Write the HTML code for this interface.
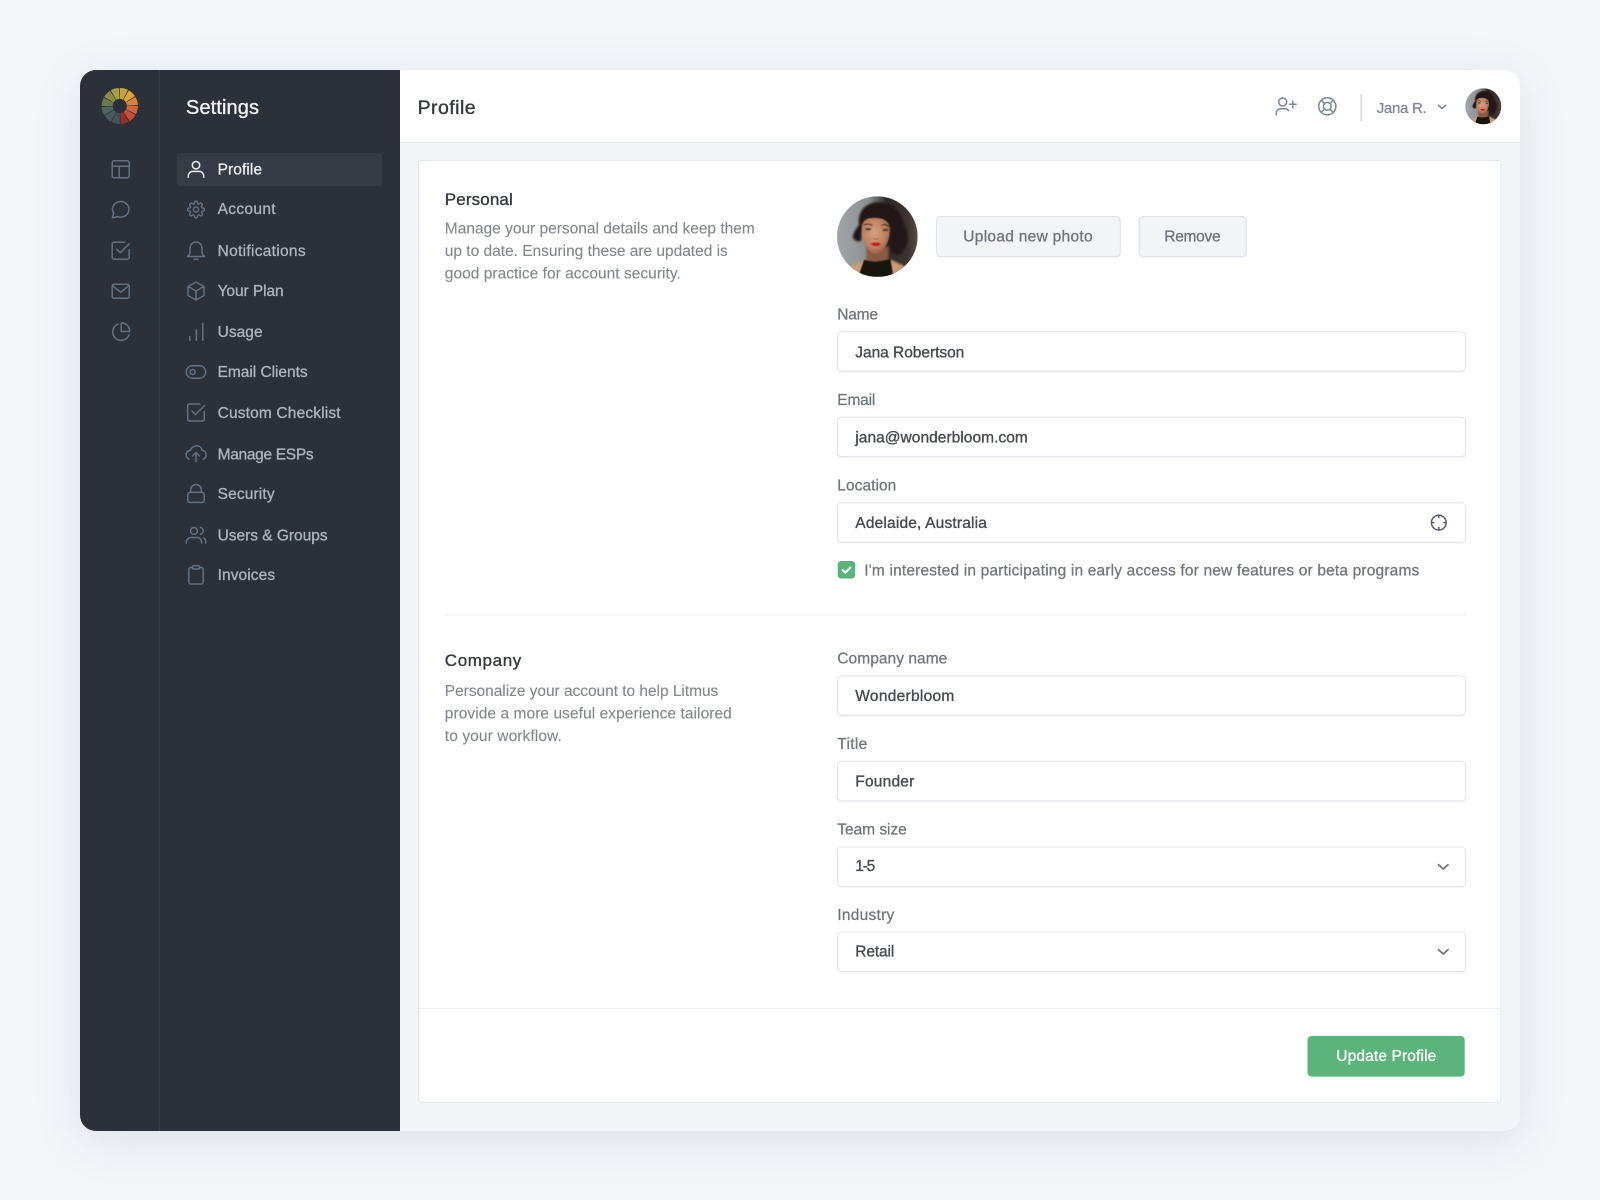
<!DOCTYPE html>
<html lang="en"><head><meta charset="utf-8"><title>Profile Settings</title>
<style>
html,body{margin:0;padding:0;width:1600px;height:1200px;overflow:hidden;background:#f4f7fa}
#card{position:absolute;left:80px;top:70px;width:1440px;height:1061px;border-radius:16px;background:#f3f6f9;box-shadow:0 10px 50px rgba(40,50,60,.11)}
svg{position:absolute;left:0;top:0}
text{font-family:"Liberation Sans",Arial,sans-serif;font-size:15.5px;white-space:pre}
.nav{fill:#aeb5be;stroke:#aeb5be;stroke-width:.3px}
.lab{fill:#6f757c;stroke:#6f757c;stroke-width:.25px;font-size:15.5px}
.val{fill:#454a52;stroke:#454a52;stroke-width:.35px;font-size:15.5px}
.des{fill:#80868d;font-size:15.5px;stroke:#80868d;stroke-width:.1px}
.hd{fill:#33373e;stroke:#33373e;stroke-width:.35px;font-size:17px}
.ic{fill:none;stroke:#647181;stroke-width:1.5;stroke-linecap:round;stroke-linejoin:round}
.in{fill:#fff;stroke:#e4e7ea;stroke-width:1.1;filter:drop-shadow(0 1px .6px rgba(30,40,50,.06))}
.btn{fill:#f3f4f8;stroke:#e0e2e8;stroke-width:1.1;filter:drop-shadow(0 1px .6px rgba(30,40,50,.05))}
</style></head><body>
<div id="card"></div>
<svg width="1600" height="1200" viewBox="0 0 1600 1200" xmlns="http://www.w3.org/2000/svg">
<defs>
<clipPath id="sb"><path d="M96 70H400V1131H96a16 16 0 0 1-16-16V86a16 16 0 0 1 16-16z"/></clipPath>
<clipPath id="hb"><path d="M400 70H1504a16 16 0 0 1 16 16V142H400z"/></clipPath>
<filter id="bl" x="-20%" y="-20%" width="140%" height="140%"><feGaussianBlur stdDeviation="1.1"/></filter>
<filter id="bl2" x="-20%" y="-20%" width="140%" height="140%"><feGaussianBlur stdDeviation=".55"/></filter>
<clipPath id="ci"><circle r="40"/></clipPath>
<linearGradient id="bgg" x1="0" x2="1" y1="0" y2="0"><stop offset="0" stop-color="#a0a6a9"/><stop offset=".4" stop-color="#8b9092"/><stop offset=".62" stop-color="#2c2826"/><stop offset=".88" stop-color="#3c3431"/><stop offset="1" stop-color="#5a4a44"/></linearGradient>
<radialGradient id="sk" cx=".45" cy=".42" r=".62"><stop offset="0" stop-color="#d6a283"/><stop offset=".65" stop-color="#bd8060"/><stop offset="1" stop-color="#8c5a42"/></radialGradient>
<symbol id="face" viewBox="-40 -40 80 80" overflow="visible">
<g clip-path="url(#ci)">
<rect x="-40" y="-40" width="80" height="80" fill="url(#bgg)"/>
<g filter="url(#bl)">
<path d="M-40 36 L-24 28 L-11 23 L14 23 L24 28 L40 35 V40 H-40z" fill="#c99c74"/>
<path d="M-18 -12 C-20 -26 -10 -35 3 -34 C16 -33 24 -24 26 -12 C32 -4 31 8 25 15 C21 20 14 19 12 10 L13 -8 L-15 -8 L-16 4 C-19 6 -25 4 -24 -1 C-23 -6 -20 -8 -18 -12Z" fill="#241915"/>
<path d="M-11 10 H11 V26 H-11z" fill="#8a5a42"/>
</g>
<g filter="url(#bl2)">
<path d="M-15.5 -9 C-15 -18 -8 -19 0 -18.5 C8 -18 13 -14 12.5 -6 C12 6 6 16.5 -2 17.5 C-9 17 -15.5 5 -15.5 -9z" fill="url(#sk)"/>
<ellipse cx="-9" cy="-7.4" rx="3" ry="1.3" fill="#3f3f3c"/>
<ellipse cx="8" cy="-6.6" rx="3" ry="1.3" fill="#3f3f3c"/>
<path d="M-13 -11.4 Q-9 -13.6 -5 -11M3.8 -11 Q8 -13 11.4 -9.8" stroke="#2e1e18" stroke-width="1.1" fill="none"/>
<path d="M-7 7.4 Q-3 5 -1.2 6 Q1 5 4.2 7.6 Q-1.5 11.8 -7 7.4z" fill="#c8161f"/>
<path d="M-4 1.8 Q-1.2 3.4 1.4 1.8" stroke="#8a5a42" stroke-width=".8" fill="none"/>
<path d="M-13 23 Q-2 27 13 22 L16 40 H-19z" fill="#141210"/>
</g>
</g>
</symbol>
</defs>

<!-- sidebar -->
<g clip-path="url(#sb)"><rect x="80" y="70" width="320" height="1061" fill="#2c3038"/><rect x="159" y="70" width="1" height="1061" fill="#363b44"/></g>
<g clip-path="url(#hb)"><rect x="400" y="70" width="1120" height="72" fill="#fff"/></g>
<rect x="400" y="142" width="1120" height="1" fill="#e3e6ea"/>

<!-- logo -->
<g transform="translate(119.8 106)" fill="none" stroke-width="11" opacity=".93">
<circle r="12.6" pathLength="120" stroke-dasharray="9 111" stroke="#d2ab35" transform="rotate(-90)"/>
<circle r="12.6" pathLength="120" stroke-dasharray="9 111" stroke="#e9ad36" transform="rotate(-60)"/>
<circle r="12.6" pathLength="120" stroke-dasharray="9 111" stroke="#e88b3a" transform="rotate(-30)"/>
<circle r="12.6" pathLength="120" stroke-dasharray="9 111" stroke="#dd6a3a" transform="rotate(0)"/>
<circle r="12.6" pathLength="120" stroke-dasharray="9 111" stroke="#cf5238" transform="rotate(30)"/>
<circle r="12.6" pathLength="120" stroke-dasharray="9 111" stroke="#9b3126" transform="rotate(60)"/>
<circle r="12.6" pathLength="120" stroke-dasharray="9 111" stroke="#46565f" transform="rotate(90)"/>
<circle r="12.6" pathLength="120" stroke-dasharray="9 111" stroke="#4d5e60" transform="rotate(120)"/>
<circle r="12.6" pathLength="120" stroke-dasharray="9 111" stroke="#566a5c" transform="rotate(150)"/>
<circle r="12.6" pathLength="120" stroke-dasharray="9 111" stroke="#6f8155" transform="rotate(180)"/>
<circle r="12.6" pathLength="120" stroke-dasharray="9 111" stroke="#8f9347" transform="rotate(210)"/>
<circle r="12.6" pathLength="120" stroke-dasharray="9 111" stroke="#b3a73f" transform="rotate(240)"/>
</g>

<!-- rail icons -->
<g class="ic" stroke-width="1.6">
<g transform="translate(120.7 169.3)"><rect x="-8.5" y="-8.5" width="17" height="17" rx="2"/><path d="M-8.5 -3H8.5M-1.5 -3V8.5"/></g>
<g transform="translate(120.7 209.6)"><path d="M-8.4 8.2L-7 3.8A8.2 7.8 0 1 1 -3 7Z"/></g>
<g transform="translate(120.7 250.7)"><path d="M8.5 -1V6.5a2 2 0 0 1-2 2H-6.5a2 2 0 0 1-2-2V-6.5a2 2 0 0 1 2-2H4"/><path d="M-4 -1.5L-.5 2L8.5 -7"/></g>
<g transform="translate(120.7 291.3)"><rect x="-8.5" y="-7" width="17" height="14" rx="1.8"/><path d="M-8 -5.5L0 1L8 -5.5"/></g>
<g transform="translate(120.7 331.7)"><path d="M-2.5 -7.6A8.4 8.4 0 1 0 8.4 3"/><path d="M.5 -8.8A8.4 8.4 0 0 1 9 -.2H.5Z"/></g>
</g>

<text x="186" y="114" textLength="73" style="font-size:20px;fill:#f2f3f5;stroke:#f2f3f5;stroke-width:.35px">Settings</text>

<!-- active nav -->
<rect x="177" y="153.3" width="205" height="32.7" rx="3" fill="#363c45"/>

<!-- nav icons -->
<g class="ic" style="stroke:#eceef0" transform="translate(196 170)"><circle cy="-4.8" r="3.7"/><path d="M-7.7 7.3V6a4.6 4.6 0 0 1 4.6-4.6H3.1A4.6 4.6 0 0 1 7.7 6V7.3"/></g>
<g class="ic">
<g transform="translate(196 209.5) scale(.76) translate(-12 -12)" stroke-width="1.9"><circle cx="12" cy="12" r="3.4"/><path d="M19.4 15a1.65 1.65 0 0 0 .33 1.82l.06.06a2 2 0 0 1 0 2.83 2 2 0 0 1-2.83 0l-.06-.06a1.65 1.65 0 0 0-1.82-.33 1.65 1.65 0 0 0-1 1.51V21a2 2 0 0 1-2 2 2 2 0 0 1-2-2v-.09A1.65 1.65 0 0 0 9 19.4a1.65 1.65 0 0 0-1.82.33l-.06.06a2 2 0 0 1-2.83 0 2 2 0 0 1 0-2.83l.06-.06a1.65 1.65 0 0 0 .33-1.82 1.65 1.65 0 0 0-1.51-1H3a2 2 0 0 1-2-2 2 2 0 0 1 2-2h.09A1.65 1.65 0 0 0 4.6 9a1.65 1.65 0 0 0-.33-1.82l-.06-.06a2 2 0 0 1 0-2.83 2 2 0 0 1 2.83 0l.06.06a1.65 1.65 0 0 0 1.82.33H9a1.65 1.65 0 0 0 1-1.51V3a2 2 0 0 1 2-2 2 2 0 0 1 2 2v.09a1.65 1.65 0 0 0 1 1.51 1.65 1.65 0 0 0 1.82-.33l.06-.06a2 2 0 0 1 2.83 0 2 2 0 0 1 0 2.83l-.06.06a1.65 1.65 0 0 0-.33 1.82V9a1.65 1.65 0 0 0 1.51 1H21a2 2 0 0 1 2 2 2 2 0 0 1-2 2h-.09a1.65 1.65 0 0 0-1.51 1z"/></g>
<g transform="translate(196 250)"><path d="M-8.5 6.5C-6.2 5 -6 3 -6 -1.5A6 6.5 0 0 1 6 -1.5C6 3 6.2 5 8.5 6.5Z"/><path d="M-1.8 9.2H1.8"/></g>
<g transform="translate(196 291)"><path d="M0 -9L8 -4.5V4.5L0 9L-8 4.5V-4.5ZM-8 -4.5L0 0L8 -4.5M0 0V9"/></g>
<g transform="translate(196 332)"><path d="M-6.2 4.5V8.4M.4 -2V8.4M6.8 -8.6V8.4"/></g>
<g transform="translate(196 372)"><rect x="-9.7" y="-6.2" width="19.4" height="12.4" rx="6.2"/><circle cx="-3.4" r="2.5"/></g>
<g transform="translate(196 412.5)"><path d="M8.3 -1V6.5a2 2 0 0 1-2 2H-6.3a2 2 0 0 1-2-2V-6.5a2 2 0 0 1 2-2H4"/><path d="M-4 -1.5L-.5 2L8.5 -7"/></g>
<g transform="translate(196 452.8)"><path d="M-7 6.5C-11.5 4 -10.5 -2 -5.5 -2.5C-3 -8.5 5 -8.5 6 -2.5C11 -2 11.5 4 7.4 6.5"/><path d="M0 8.8V0M-3.5 3.2L0 -.3L3.5 3.2"/></g>
<g transform="translate(196 494)"><rect x="-8.2" y="-1.6" width="16.4" height="10" rx="2"/><path d="M-5.3 -1.6V-4.2a5.3 5.3 0 0 1 10.6 0V-1.6"/></g>
<g transform="translate(196 535.5)"><circle cx="-2" cy="-4.6" r="3.4"/><path d="M-9.7 7.5V6.5A4.6 4.6 0 0 1 -5 2H1A4.6 4.6 0 0 1 5.6 6.5V7.5"/><path d="M4.4 -8.2A3.6 3.6 0 0 1 4.4 -1.2M7.6 2.4A4.4 4.4 0 0 1 9.8 6.2V7.5"/></g>
<g transform="translate(196 575)"><rect x="-7.2" y="-7.6" width="14.4" height="16.6" rx="2"/><rect x="-3.4" y="-9.4" width="6.8" height="3.4" rx="1" fill="#2c3038"/></g>
</g>

<!-- nav text -->
<text x="217.6" y="174.7" textLength="44.5" style="fill:#eceef0;stroke:#eceef0;stroke-width:.3px">Profile</text>
<text class="nav" x="217.6" y="214.2" textLength="58">Account</text>
<text class="nav" x="217.6" y="255.8" textLength="88">Notifications</text>
<text class="nav" x="217.6" y="296.2" textLength="66">Your Plan</text>
<text class="nav" x="217.6" y="336.8" textLength="45">Usage</text>
<text class="nav" x="217.6" y="377" textLength="90">Email Clients</text>
<text class="nav" x="217.6" y="417.8" textLength="123">Custom Checklist</text>
<text class="nav" x="217.6" y="459.3" textLength="96">Manage ESPs</text>
<text class="nav" x="217.6" y="499" textLength="57">Security</text>
<text class="nav" x="217.6" y="540.4" textLength="110">Users &amp; Groups</text>
<text class="nav" x="217.6" y="580" textLength="57.5">Invoices</text>

<!-- header -->
<text x="417.6" y="114" textLength="58" style="font-size:19.5px;fill:#33373e;stroke:#33373e;stroke-width:.35px">Profile</text>
<g class="ic" style="stroke:#7b8794" stroke-width="1.6">
<circle cx="1282.7" cy="102" r="4"/><path d="M1276.2 114.8V113.4a4.6 4.6 0 0 1 4.6-4.6H1285a4.6 4.6 0 0 1 3.6 1.7M1292.8 101v6.6M1289.5 104.3h6.6"/>
<circle cx="1327.3" cy="106.3" r="8.6"/><circle cx="1327.3" cy="106.3" r="3.9"/><path d="M1321.2 100.2l3.3 3.3M1330.1 109.1l3.3 3.3M1333.4 100.2l-3.3 3.3M1324.5 109.1l-3.3 3.3"/>
<path d="M1438.3 105.2l3.7 3.4 3.7-3.4"/>
</g>
<rect x="1360.2" y="94" width="2" height="27" fill="#dde1e6"/>
<text x="1376.7" y="112.8" textLength="50" style="font-size:15px;fill:#7b8794;stroke:#7b8794;stroke-width:.25px">Jana R.</text>
<use href="#face" x="1465.3" y="88.3" width="36" height="36"/>

<!-- inner card -->
<rect x="418.5" y="160.5" width="1082.5" height="942" rx="3" fill="#fff" stroke="#e3e6ea"/>
<rect x="445" y="614.5" width="1020.5" height="1" fill="#eceef1"/>
<rect x="419" y="1008" width="1082" height="1" fill="#eceef1"/>

<!-- personal -->
<text class="hd" x="444.8" y="205" textLength="68">Personal</text>
<text class="des" x="444.8" y="233.5" textLength="310">Manage your personal details and keep them</text>
<text class="des" x="444.8" y="256" textLength="283">up to date. Ensuring these are updated is</text>
<text class="des" x="444.8" y="278.5" textLength="236">good practice for account security.</text>

<use href="#face" x="837" y="196.3" width="80.6" height="80.6"/>
<rect class="btn" x="936.6" y="216.6" width="183.6" height="40" rx="4"/>
<text x="963.3" y="241.5" textLength="129.3" style="fill:#6f747c;stroke:#6f747c;stroke-width:.3px">Upload new photo</text>
<rect class="btn" x="1139.2" y="216.6" width="107" height="40" rx="4"/>
<text x="1164.3" y="241.5" textLength="56.3" style="fill:#6f747c;stroke:#6f747c;stroke-width:.3px">Remove</text>

<text class="lab" x="837.3" y="319.5" textLength="40.7">Name</text>
<rect class="in" x="837.5" y="331.7" width="628" height="39.5" rx="4"/>
<text class="val" x="855.3" y="357.3" textLength="109">Jana Robertson</text>

<text class="lab" x="837.3" y="405" textLength="38">Email</text>
<rect class="in" x="837.5" y="417.2" width="628" height="39.5" rx="4"/>
<text class="val" x="855.3" y="442.6" textLength="172.5">jana@wonderbloom.com</text>

<text class="lab" x="837.3" y="490.4" textLength="59">Location</text>
<rect class="in" x="837.5" y="502.8" width="628" height="39.5" rx="4"/>
<text class="val" x="855.3" y="527.8" textLength="131.6">Adelaide, Australia</text>
<g fill="none" stroke="#4f5660" stroke-width="1.4"><circle cx="1438.8" cy="522.6" r="7.4"/><path d="M1438.8 515.2v3M1438.8 527v3M1431.4 522.6h3M1443.2 522.6h3"/></g>

<rect x="837.7" y="561" width="17.5" height="17.5" rx="3.5" fill="#5bb47a"/>
<path d="M842.6 570l2.8 2.7 5-5.2" fill="none" stroke="#fff" stroke-width="2" stroke-linecap="round" stroke-linejoin="round"/>
<text class="lab" x="864.3" y="575.6" textLength="555">I'm interested in participating in early access for new features or beta programs</text>

<!-- company -->
<text class="hd" x="444.8" y="666" textLength="76.5">Company</text>
<text class="des" x="444.8" y="696" textLength="273.5">Personalize your account to help Litmus</text>
<text class="des" x="444.8" y="718.5" textLength="287">provide a more useful experience tailored</text>
<text class="des" x="444.8" y="741" textLength="117">to your workflow.</text>

<text class="lab" x="837.3" y="663.3" textLength="110">Company name</text>
<rect class="in" x="837.5" y="675.8" width="628" height="39.5" rx="4"/>
<text class="val" x="855.3" y="701.1" textLength="99">Wonderbloom</text>

<text class="lab" x="837.3" y="748.8" textLength="30">Title</text>
<rect class="in" x="837.5" y="761.3" width="628" height="39.5" rx="4"/>
<text class="val" x="855.3" y="786.5" textLength="59">Founder</text>

<text class="lab" x="837.3" y="834.3" textLength="69.5">Team size</text>
<rect class="in" x="837.5" y="847" width="628" height="39.5" rx="4"/>
<text class="val" x="855.3" y="870.8" textLength="20">1-5</text>
<path d="M1438.6 864.7l4.7 4.3 4.7-4.3" fill="none" stroke="#6b7079" stroke-width="1.7" stroke-linecap="round" stroke-linejoin="round"/>

<text class="lab" x="837.3" y="920" textLength="57">Industry</text>
<rect class="in" x="837.5" y="932" width="628" height="39.5" rx="4"/>
<text class="val" x="855.3" y="956.3" textLength="39">Retail</text>
<path d="M1438.6 949.7l4.7 4.3 4.7-4.3" fill="none" stroke="#6b7079" stroke-width="1.7" stroke-linecap="round" stroke-linejoin="round"/>

<rect x="1307.5" y="1036" width="157.2" height="40.6" rx="4" fill="#5bb47a"/>
<text x="1336.3" y="1061" textLength="100" style="fill:#fff;stroke:#fff;stroke-width:.3px">Update Profile</text>
</svg>
</body></html>
